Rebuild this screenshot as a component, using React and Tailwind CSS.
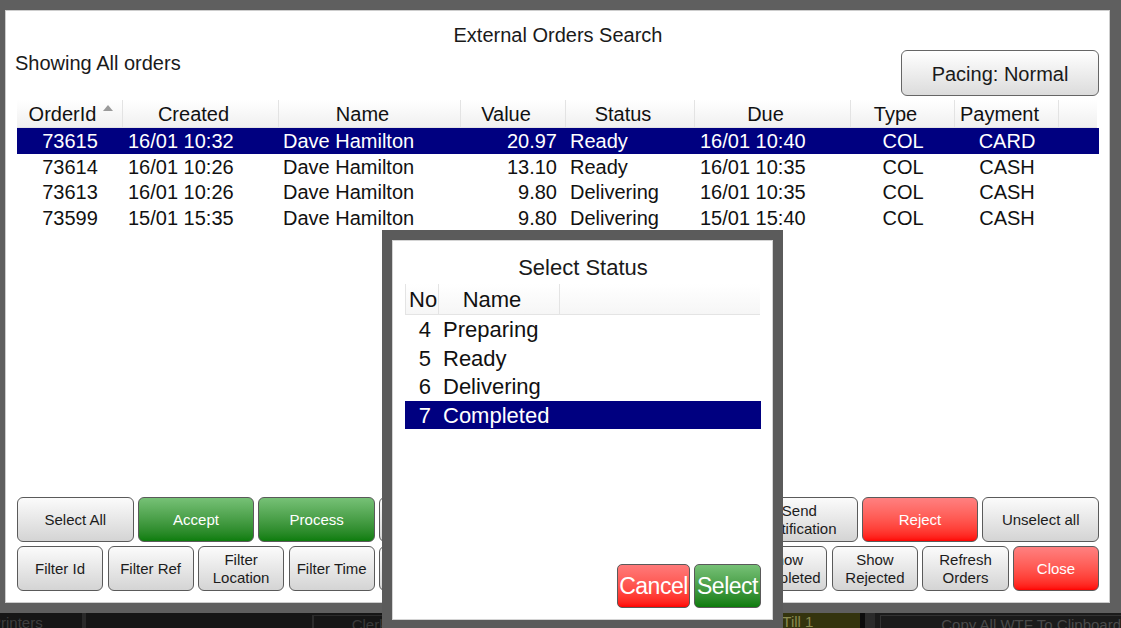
import React from 'react'

const orders = [
  { id: '73615', created: '16/01 10:32', name: 'Dave Hamilton', value: '20.97', status: 'Ready', due: '16/01 10:40', type: 'COL', payment: 'CARD' },
  { id: '73614', created: '16/01 10:26', name: 'Dave Hamilton', value: '13.10', status: 'Ready', due: '16/01 10:35', type: 'COL', payment: 'CASH' },
  { id: '73613', created: '16/01 10:26', name: 'Dave Hamilton', value: '9.80', status: 'Delivering', due: '16/01 10:35', type: 'COL', payment: 'CASH' },
  { id: '73599', created: '15/01 15:35', name: 'Dave Hamilton', value: '9.80', status: 'Delivering', due: '15/01 15:40', type: 'COL', payment: 'CASH' },
]

const statuses = [
  { no: 4, name: 'Preparing' },
  { no: 5, name: 'Ready' },
  { no: 6, name: 'Delivering' },
  { no: 7, name: 'Completed' },
]

const topButtons = [
  { label: 'Select All' },
  { label: 'Accept', tone: 'green' },
  { label: 'Process', tone: 'green' },
  { label: 'Print' },
  { label: 'Status' },
  { label: 'Driver' },
  { label: 'Send Notification' },
  { label: 'Reject', tone: 'red' },
  { label: 'Unselect all' },
]

const bottomButtons = [
  { label: 'Filter Id' },
  { label: 'Filter Ref' },
  { label: 'Filter Location' },
  { label: 'Filter Time' },
  { label: 'Filter Type' },
  { label: 'Show All' },
  { label: 'Show New' },
  { label: 'Show Live' },
  { label: 'Show Completed' },
  { label: 'Show Rejected' },
  { label: 'Refresh Orders' },
  { label: 'Close', tone: 'red' },
]

const toneClass = {
  gray: 'bg-gradient-to-b from-[#fbfbfb] to-[#d4d4d4] text-[#1c1c1c]',
  green: 'bg-gradient-to-b from-[#76c176] to-[#0b7d0b] text-white',
  red: 'bg-gradient-to-b from-[#ff8080] to-[#ff0000] text-white',
}

function PanelButton({ label, tone = 'gray' }) {
  return (
    <button
      className={`flex-1 min-w-0 h-[45px] rounded-[6px] border border-[#5a5a5a] px-[2px] text-[15px] leading-[18px] text-center ${toneClass[tone]}`}
    >
      {label}
    </button>
  )
}

const cols = 'grid grid-cols-[106px_156px_182px_105px_129px_156px_104px_104px_1fr]'

export default function App() {
  return (
    <div className="relative w-[1121px] h-[628px] overflow-hidden bg-[#5f5f5f] font-['Liberation_Sans',Arial,sans-serif] text-[#111]">
      <div className="mt-[10px] ml-[5px] w-[1105px] h-[593px] bg-white border border-[#cdcdcd] flex flex-col pt-[13px] pl-[11px] pr-[10px] pb-[11px]">
        <div className="text-center text-[20px] leading-[23px] text-[#1a1a1a]">External Orders Search</div>

        <div className="flex justify-between items-start mt-[3px]">
          <div className="-ml-[2px] mt-[2px] text-[20px] leading-[23px] text-[#1a1a1a]">Showing All orders</div>
          <button className="w-[198px] h-[46px] rounded-[6px] border border-[#666] bg-gradient-to-b from-[#ffffff] to-[#dcdcdc] text-[20px] pt-[2px] text-[#1a1a1a]">
            Pacing: Normal
          </button>
        </div>

        <div className="flex-1 mt-[4px]">
          <div className={`${cols} h-[28px] mr-[2px] bg-gradient-to-b from-white to-[#f0f0f0] border-b border-[#e3e3e3] text-[20px] leading-[28px]`}>
            <div className="relative text-center pr-[14px] border-r border-[#e3e3e3]">
              OrderId
              <span className="absolute left-[86px] top-[5px] w-0 h-0 border-l-[5px] border-r-[5px] border-b-[6px] border-l-transparent border-r-transparent border-b-[#9a9a9a]" />
            </div>
            <div className="text-center pr-[14px] border-r border-[#e3e3e3]">Created</div>
            <div className="text-center pr-[14px] border-r border-[#e3e3e3]">Name</div>
            <div className="text-center pr-[14px] border-r border-[#e3e3e3]">Value</div>
            <div className="text-center pr-[14px] border-r border-[#e3e3e3]">Status</div>
            <div className="text-center pr-[14px] border-r border-[#e3e3e3]">Due</div>
            <div className="text-center pr-[14px] border-r border-[#e3e3e3]">Type</div>
            <div className="text-center pr-[14px] border-r border-[#e3e3e3]">Payment</div>
            <div />
          </div>
          {orders.map((o, i) => (
            <div
              key={o.id}
              className={`${cols} h-[25.7px] text-[20px] leading-[26px] whitespace-nowrap ${i === 0 ? 'bg-[#000080] text-white' : ''}`}
            >
              <div className="text-center">{o.id}</div>
              <div className="pl-[5px]">{o.created}</div>
              <div className="pl-[4px]">{o.name}</div>
              <div className="text-right pr-[9px]">{o.value}</div>
              <div className="pl-[4px]">{o.status}</div>
              <div className="pl-[5px]">{o.due}</div>
              <div className="text-center">{o.type}</div>
              <div className="text-center">{o.payment}</div>
              <div />
            </div>
          ))}
        </div>

        <div className="flex gap-[4px]">
          {topButtons.map((b) => (
            <PanelButton key={b.label} {...b} />
          ))}
        </div>
        <div className="flex gap-[4.5px] mt-[4px]">
          {bottomButtons.map((b) => (
            <PanelButton key={b.label} {...b} />
          ))}
        </div>
      </div>

      <div className="mt-[10px] h-[15px] flex bg-[#161616] text-[15px] leading-[18px] whitespace-nowrap overflow-hidden">
        <div className="w-[82px] overflow-hidden">
          <span className="block -ml-[9px] pt-[1px] text-[#3e3e3e]">Printers</span>
        </div>
        <div className="w-[4px] bg-[#2a2a2a]" />
        <div className="w-[226px]" />
        <div className="w-[300px] mt-[2px] border-l-2 border-t border-[#2c2c2c] pl-[38px] text-[#3a3a3a]">Clerk</div>
        <div className="w-[151px]" />
        <div className="w-[98px] bg-[#34340e] pl-[20px] text-[#8a8a50]">Till 1</div>
        <div className="w-[5px] bg-[#0c0c0c]" />
        <div className="w-[10px] bg-[#2b2b2b]" />
        <div className="flex-1 bg-[#1b1b1b] pl-[5px]">
          <div className="h-full mt-[2px] border-l border-t border-[#333] pl-[60px] text-[#4a4a4a]">Copy All WTF To Clipboard</div>
        </div>
      </div>

      <div className="absolute left-[382px] top-[230px] w-[401px] h-[400px] border-[10px] border-[#5b5b5b]">
        <div className="h-full bg-white border border-[#d4d4d4] flex flex-col pt-[14px] pl-[12px] pr-[11px] pb-[11px]">
          <div className="text-center text-[22px] leading-[25px] text-[#1a1a1a]">Select Status</div>
          <div className="mt-[4px] mr-[1px] h-[31px] grid grid-cols-[33px_121px_1fr] border-b border-l border-[#e4e4e4] bg-gradient-to-b from-white to-[#f6f6f6] text-[22px] leading-[31px]">
            <div className="pl-[3px] border-r border-[#e4e4e4]">No</div>
            <div className="text-center pr-[14px] border-r border-[#e4e4e4]">Name</div>
            <div />
          </div>
          {statuses.map((s) => (
            <div
              key={s.no}
              className={`h-[28.5px] grid grid-cols-[33px_1fr] text-[22px] leading-[29px] ${s.no === 7 ? 'bg-[#000080] text-white' : ''}`}
            >
              <div className="text-right pr-[7px]">{s.no}</div>
              <div className="pl-[5px]">{s.name}</div>
            </div>
          ))}
          <div className="mt-auto flex justify-end gap-[4px]">
            <button className="w-[73px] h-[44px] rounded-[5px] border border-[#5a5a5a] bg-gradient-to-b from-[#ff7a7a] to-[#ff0000] text-white text-[23px] tracking-[-0.5px]">
              Cancel
            </button>
            <button className="w-[67px] h-[44px] rounded-[5px] border border-[#5a5a5a] bg-gradient-to-b from-[#76c176] to-[#0b7d0b] text-white text-[23px] tracking-[-0.5px]">
              Select
            </button>
          </div>
        </div>
      </div>
    </div>
  )
}
